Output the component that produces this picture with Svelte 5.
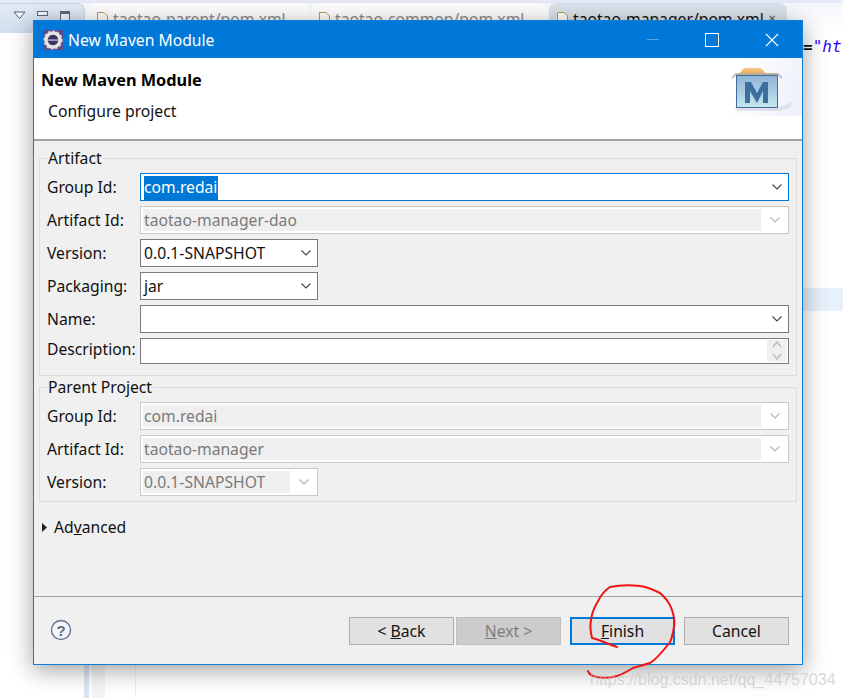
<script>
    const artifact_rows = [
        { label: "Group Id:", value: "com.redai", type: "focus" },
        { label: "Artifact Id:", value: "taotao-manager-dao", type: "off" },
        { label: "Version:", value: "0.0.1-SNAPSHOT", type: "short" },
        { label: "Packaging:", value: "jar", type: "short" },
        { label: "Name:", value: "", type: "on" }
    ]
    const parent_rows = [
        { label: "Group Id:", value: "com.redai", type: "off" },
        { label: "Artifact Id:", value: "taotao-manager", type: "off" },
        { label: "Version:", value: "0.0.1-SNAPSHOT", type: "off short" }
    ]
    const tabs = [
        { name: "taotao-parent/pom.xml", w: 220, cur: false },
        { name: "taotao-common/pom.xml", w: 236, cur: false },
        { name: "taotao-manager/pom.xml", w: 238, cur: true }
    ]
</script>

{#snippet chevron(color)}
    <svg class="chev" width="10" height="6" viewBox="0 0 10 6"><path d="M0.5 0.5 L5 5 L9.5 0.5" fill="none" stroke={color} stroke-width="1.1"/></svg>
{/snippet}

{#snippet field(row)}
    <div class="label">{row.label}</div>
    <div class="combo {row.type}">
        <span class="value">
            {#if row.type === "focus"}<span class="sel">{row.value}</span>{:else}{row.value}{/if}
        </span>
        <span class="arrow">{@render chevron(row.type.includes("off") ? "#b4b4b4" : "#444")}</span>
    </div>
{/snippet}

<div class="page">
    <div class="top-band">
        <div class="view-tab">
            <svg width="13" height="9" viewBox="0 0 13 9"><path d="M1 1 H12 L6.5 7.5 Z" fill="#f6f8fb" stroke="#55606c"/></svg>
            <span class="mini-min"></span>
            <span class="mini-max"></span>
        </div>
        <div class="tabs">
            {#each tabs as t}
                <div class="tab" class:cur={t.cur} style="width:{t.w}px">
                    <svg width="11" height="14" viewBox="0 0 11 14"><path d="M0.5 0.5 H7 L10.5 4 V13.5 H0.5 Z" fill="#fffdf5" stroke="#b59a5c"/><rect x="3" y="8" width="5" height="4" fill="#3b6ea5"/></svg>
                    <span>{t.name}</span>
                    {#if t.cur}<span class="tab-x">✕</span>{/if}
                </div>
            {/each}
        </div>
    </div>

    <div class="workspace">
        <div class="left-panel"></div>
        <div class="sash"></div>
        <div class="ruler"></div>
        <div class="editor">
            <div class="code">=<i>"ht</i></div>
            <div class="cur-line"></div>
        </div>
    </div>

    <div class="dialog">
        <div class="titlebar">
            <svg class="app-icon" width="20" height="20" viewBox="0 0 20 20">
                <rect width="20" height="20" fill="#5a4a8c"/>
                <circle cx="10" cy="10" r="7" fill="none" stroke="#e6e6e6" stroke-width="3.4"/>
                <circle cx="10" cy="10" r="8.6" fill="none" stroke="#d8d8d8" stroke-width="2" stroke-dasharray="2.4 2"/>
                <circle cx="10" cy="10" r="5" fill="#3d3560"/>
                <rect x="5" y="9.4" width="10" height="1.4" fill="#b9b4cc"/>
            </svg>
            <span class="title">New Maven Module</span>
            <div class="win-btns">
                <span class="w-min"></span>
                <span class="w-max"></span>
                <svg width="14" height="14" viewBox="0 0 14 14"><path d="M1 1 L13 13 M13 1 L1 13" stroke="#fff" stroke-width="1.1"/></svg>
            </div>
        </div>

        <div class="header">
            <div class="banner">
                <svg width="62" height="50" viewBox="0 0 62 50">
                    <defs>
                        <linearGradient id="boxfill" x1="0" y1="0" x2="0" y2="1">
                            <stop offset="0" stop-color="#8fb4d6"/>
                            <stop offset="1" stop-color="#c6e6ee"/>
                        </linearGradient>
                        <linearGradient id="lidfill" x1="0" y1="0" x2="0" y2="1">
                            <stop offset="0" stop-color="#f7c67e"/>
                            <stop offset="1" stop-color="#eda94e"/>
                        </linearGradient>
                    </defs>
                    <path d="M2 44 H46 L60 38 L58 44 L46 47 H6 Z" fill="#d6d6e4" opacity="0.7"/>
                    <path d="M4 10 C7 10 9 8 11 5 C12 4 13 4 15 4 H27 C30 4 31 6 33 9 L46 9 V12 H4 Z" fill="url(#lidfill)"/>
                    <path d="M0 14 L4 10 H46 L50 14" fill="none" stroke="#a9adb3" stroke-width="1.4"/>
                    <rect x="4.5" y="11.5" width="41" height="32" fill="url(#boxfill)" stroke="#3f6f99"/>
                    <path d="M13 39 V18 H19 L25 29 L31 18 H36 V39 H31 V27 L25 39 L18 27 V39 Z" fill="#3d6f9e"/>
                </svg>
            </div>
            <div class="h-title">New Maven Module</div>
            <div class="h-sub">Configure project</div>
        </div>

        <div class="body">
            <fieldset class="group artifact">
                <legend>Artifact</legend>
                <div class="rows">
                    {#each artifact_rows as row}
                        {@render field(row)}
                    {/each}
                    <div class="label desc">Description:</div>
                    <div class="textarea">
                        <div class="spin">
                            <svg width="10" height="24" viewBox="0 0 10 24"><path d="M1 8 L5 3 L9 8 M1 15 L5 20 L9 15" fill="none" stroke="#c4c4c4" stroke-width="1.8"/></svg>
                        </div>
                    </div>
                </div>
            </fieldset>

            <fieldset class="group parent">
                <legend>Parent Project</legend>
                <div class="rows">
                    {#each parent_rows as row}
                        {@render field(row)}
                    {/each}
                </div>
            </fieldset>

            <div class="advanced">
                <svg width="5" height="9" viewBox="0 0 5 9"><path d="M0 0 L5 4.5 L0 9 Z" fill="#222"/></svg>
                <span>Ad<u>v</u>anced</span>
            </div>
        </div>

        <div class="footer">
            <svg class="help" width="22" height="22" viewBox="0 0 22 22">
                <circle cx="11" cy="11" r="9.5" fill="#f4f5f8" stroke="#66748f" stroke-width="1.4"/>
                <text x="11" y="16.5" text-anchor="middle" font-size="15" font-weight="700" fill="#5b6a86" font-family="Liberation Sans, sans-serif">?</text>
            </svg>
            <div class="buttons">
                <div class="pair">
                    <button class="btn">&lt; <u>B</u>ack</button>
                    <button class="btn dis"><u>N</u>ext &gt;</button>
                </div>
                <button class="btn primary"><u>F</u>inish</button>
                <button class="btn">Cancel</button>
            </div>
        </div>
    </div>

    <svg class="scribble" width="843" height="698" viewBox="0 0 843 698">
        <path d="M617 647 C608 644 600 640 592 638 C590 630 590 625 591 620 C592 612 594 608 597 603 C601 595 605 590 610 587 C620 585 630 585 640 586 C648 587 654 590 660 593 C666 598 670 604 672 610 C674 616 675 622 674 627 C673 633 672 638 670 642 C664 650 658 658 650 663 C644 665 639 666 633 668 C628 671 623 674 617 676 C610 678 603 678 597 677 C592 676 589 675 588 671" fill="none" stroke="#f01414" stroke-width="2" stroke-linecap="round"/>
    </svg>
    <div class="watermark">https://blog.csdn.net/qq_44757034</div>
</div>

<style>
    :global(body){
        margin: 0;
    }

    .page{
        width: 843px;
        height: 698px;
        position: relative;
        overflow: hidden;
        background-color: #fff;
        font-family: "Noto Sans", "Open Sans", sans-serif;
        font-size: 15.7px;
        color: #111;
        display: flex;
        flex-direction: column;
    }

    /* ECLIPSE BEHIND THE DIALOG */

    .top-band{
        height: 33px;
        padding-top: 3px;
        box-sizing: border-box;
        background: linear-gradient(#e6e9f7 0, #e6e9f7 3px, #f6f7fc 3px, #fff 100%);
        display: flex;
        gap: 4px;
    }
    .view-tab{
        width: 85px;
        box-sizing: border-box;
        border: 1px solid #c9d2dc;
        border-left: none;
        border-bottom: none;
        border-top-right-radius: 8px;
        background: linear-gradient(#e3ebf5, #cfdeee);
        display: flex;
        align-items: flex-start;
        padding: 7px 0 0 13px;
        gap: 11px;
    }
    .mini-min{
        width: 9px;
        height: 3px;
        border: 1px solid #5e6a76;
        background-color: #f2f5f9;
    }
    .mini-max{
        width: 10px;
        height: 14px;
        border: 1px solid #5e6a76;
        border-top-width: 3px;
        box-sizing: border-box;
        background-color: #f2f5f9;
        margin-left: 1px;
    }
    .tabs{
        display: flex;
        gap: 2px;
    }
    .tab{
        box-sizing: border-box;
        padding: 6px 0 0 8px;
        display: flex;
        align-items: flex-start;
        gap: 5px;
        background-color: #fdfdfe;
        border-top-left-radius: 8px;
        border-top-right-radius: 8px;
        color: #8a8a8a;
        line-height: 20px;
        position: relative;
    }
    .tab svg{
        flex: none;
        margin-top: 3px;
    }
    .tab.cur{
        background-color: #d9e1ea;
        color: #111;
    }
    .tab-x{
        position: absolute;
        right: 11px;
        top: 5px;
        font-size: 10px;
        color: #555;
    }

    .workspace{
        flex: 1;
        display: flex;
    }
    .left-panel{
        width: 84px;
        background-color: #fff;
    }
    .sash{
        width: 5px;
        background-color: #dde4f5;
    }
    .ruler{
        width: 13px;
        margin-left: 3px;
        background-color: #f5f5f5;
    }
    .editor{
        flex: 1;
        margin-left: 30px;
        border-left: 1px solid #f0f0f0;
        position: relative;
    }
    .code{
        position: absolute;
        left: 667px;
        top: 3px;
        font-family: "DejaVu Sans Mono", monospace;
        font-size: 16px;
        line-height: 22px;
        font-weight: 700;
        color: #111;
        white-space: nowrap;
    }
    .code i{
        color: #2a00ff;
        font-weight: 400;
    }
    .cur-line{
        position: absolute;
        left: 0;
        right: 0;
        top: 255px;
        height: 23px;
        background-color: #e8f1fb;
    }

    /* DIALOG */

    .dialog{
        position: absolute;
        left: 33px;
        top: 20px;
        width: 770px;
        height: 645px;
        box-sizing: border-box;
        border: 1px solid #0f7fdb;
        background-color: #f0f0f0;
        box-shadow: 0 5px 22px rgba(0, 0, 0, 0.38);
        display: flex;
        flex-direction: column;
    }
    .titlebar{
        height: 37px;
        flex: none;
        background-color: #0078d7;
        color: #fff;
        display: flex;
        align-items: center;
        padding: 0 23px 0 9px;
        gap: 5px;
    }
    .title{
        flex: 1;
    }
    .win-btns{
        display: flex;
        align-items: center;
        gap: 46px;
    }
    .w-min{
        width: 12px;
        height: 1px;
        background-color: #5aa5e3;
    }
    .w-max{
        width: 12px;
        height: 12px;
        border: 1px solid #fff;
    }

    .header{
        height: 83px;
        flex: none;
        box-sizing: border-box;
        background-color: #fff;
        border-bottom: 2px solid #a2a2a2;
        position: relative;
        padding: 11px 0 0 7px;
    }
    .h-title{
        font-size: 16.3px;
        font-weight: 700;
        line-height: 22px;
        color: #000;
    }
    .h-sub{
        line-height: 22px;
        margin: 9px 0 0 7px;
    }
    .banner{
        position: absolute;
        right: 0;
        top: 0;
        width: 72px;
        height: 58px;
        box-sizing: border-box;
        background: linear-gradient(105deg, #fff 15%, #edf0fa 100%);
        padding: 6px 0 0 2px;
    }

    .body{
        flex: 1;
        padding: 7px 5px 0;
    }
    .group{
        margin: 0;
        padding: 5px 7px 9px 7px;
        border: 1px solid #dcdcdc;
        min-width: 0;
    }
    .group.parent{
        margin-top: 1px;
        padding-top: 5px;
        padding-bottom: 5px;
    }
    legend{
        padding: 0 1px;
        margin-left: 0;
        line-height: 20px;
    }
    .rows{
        display: grid;
        grid-template-columns: 93px 1fr;
        grid-auto-rows: 28px;
        row-gap: 5px;
        align-items: center;
    }
    .label{
        line-height: 20px;
        color: #111;
    }
    .desc{
        margin-top: -7px;
    }

    .combo{
        height: 28px;
        box-sizing: border-box;
        border: 1px solid #7a7a7a;
        background-color: #fff;
        display: flex;
        align-items: center;
        padding-left: 3px;
    }
    .combo.short{
        width: 178px;
    }
    .combo.focus{
        border: 1px solid #0078d7;
    }
    .combo.off{
        border: 1px solid #cacaca;
        padding: 2px;
        color: #7a7a7a;
    }
    .value{
        flex: 1;
        min-width: 0;
        line-height: 20px;
        align-self: center;
    }
    .off .value{
        align-self: stretch;
        background-color: #efefef;
        line-height: 22px;
        padding-left: 1px;
    }
    .sel{
        background-color: #0078d7;
        color: #fff;
        padding: 0 1px 2px 0;
    }
    .arrow{
        width: 23px;
        flex: none;
        display: flex;
        justify-content: center;
        padding-left: 2px;
    }
    .off .arrow{
        background-color: #fff;
    }
    .chev{
        display: block;
    }

    .textarea{
        height: 26px;
        align-self: start;
        box-sizing: border-box;
        border: 1px solid #7a7a7a;
        background-color: #fff;
        display: flex;
        justify-content: flex-end;
        padding: 1px;
    }
    .spin{
        width: 20px;
        background-color: #f0f0f0;
        display: flex;
        justify-content: center;
        align-items: center;
    }

    .advanced{
        margin: 14px 0 0 3px;
        display: flex;
        align-items: center;
        gap: 7px;
        line-height: 22px;
    }

    .footer{
        height: 68px;
        flex: none;
        box-sizing: border-box;
        border-top: 1px solid #a2a2a2;
        display: flex;
        justify-content: space-between;
        padding: 20px 13px 0 16px;
    }
    .help{
        margin-top: 2px;
    }
    .buttons{
        display: flex;
        gap: 9px;
    }
    .pair{
        display: flex;
        gap: 2px;
    }
    .btn{
        width: 105px;
        height: 28px;
        box-sizing: border-box;
        padding: 0;
        border: 1px solid #adadad;
        background-color: #e1e1e1;
        font: inherit;
        color: #111;
    }
    .btn.dis{
        background-color: #cccccc;
        border-color: #bfbfbf;
        color: #7e7e7e;
    }
    .btn.primary{
        border: 2px solid #0078d7;
    }

    /* OVER EVERYTHING */

    .scribble{
        position: absolute;
        left: 0;
        top: 0;
    }
    .watermark{
        position: absolute;
        left: 590px;
        top: 670px;
        font-family: "Liberation Sans", sans-serif;
        font-size: 16px;
        line-height: 20px;
        color: rgba(190, 190, 190, 0.6);
        white-space: nowrap;
    }
</style>
